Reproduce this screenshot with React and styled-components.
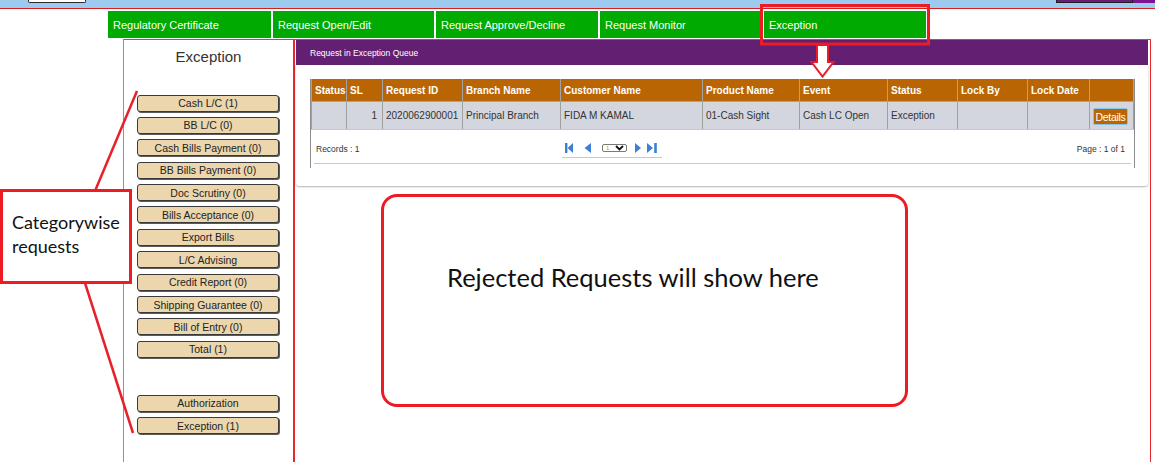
import React from "react";
import styled, { createGlobalStyle } from "styled-components";

const GlobalStyle = createGlobalStyle`
  html, body {
    margin: 0;
    padding: 0;
    background: #fff;
  }
  body {
    font-family: "Liberation Sans", Arial, sans-serif;
  }
`;

const categories = [
  "Cash L/C (1)",
  "BB L/C (0)",
  "Cash Bills Payment (0)",
  "BB Bills Payment (0)",
  "Doc Scrutiny (0)",
  "Bills Acceptance (0)",
  "Export Bills",
  "L/C Advising",
  "Credit Report (0)",
  "Shipping Guarantee (0)",
  "Bill of Entry (0)",
  "Total (1)",
];

const tabs = [
  { label: "Regulatory Certificate", w: 163 },
  { label: "Request Open/Edit", w: 161 },
  { label: "Request Approve/Decline", w: 162 },
  { label: "Request Monitor", w: 162 },
  { label: "Exception", w: 162 },
];

const columns = [
  { title: "Status", w: 35 },
  { title: "SL", w: 36 },
  { title: "Request ID", w: 80 },
  { title: "Branch Name", w: 98 },
  { title: "Customer Name", w: 142 },
  { title: "Product Name", w: 97 },
  { title: "Event", w: 88 },
  { title: "Status", w: 70 },
  { title: "Lock By", w: 70 },
  { title: "Lock Date", w: 62 },
  { title: "", w: 44 },
];

const App = () => {
  return (
    <Page>
      <GlobalStyle />
      <TopStrip>
        <StripButton />
        <StripUser />
        <StripEdge />
      </TopStrip>

      <Nav>
        {tabs.map((t) => (
          <Tab key={t.label} $w={t.w}>{t.label}</Tab>
        ))}
      </Nav>

      <Body>
        <Sidebar>
          <SideTitle>Exception</SideTitle>
          <CatList>
            {categories.map((c) => (
              <CatButton key={c}>{c}</CatButton>
            ))}
          </CatList>
          <CatList $top={37}>
            <CatButton>Authorization</CatButton>
            <CatButton>Exception (1)</CatButton>
          </CatList>
        </Sidebar>

        <Main>
          <PanelHeader>Request in Exception Queue</PanelHeader>
          <PanelBody>
            <GridBox>
              <Grid>
                <colgroup>
                  {columns.map((c, i) => (
                    <col key={i} style={{ width: c.w }} />
                  ))}
                </colgroup>
                <thead>
                  <tr>
                    {columns.map((c, i) => (
                      <Th key={i}>{c.title}</Th>
                    ))}
                  </tr>
                </thead>
                <tbody>
                  <tr>
                    <Td></Td>
                    <Td $right>1</Td>
                    <Td>2020062900001</Td>
                    <Td>Principal Branch</Td>
                    <Td>FIDA M KAMAL</Td>
                    <Td>01-Cash Sight</Td>
                    <Td>Cash LC Open</Td>
                    <Td>Exception</Td>
                    <Td></Td>
                    <Td></Td>
                    <Td>
                      <DetailsButton>Details</DetailsButton>
                    </Td>
                  </tr>
                </tbody>
              </Grid>
              <PagerRow>
                <SmallText>Records : 1</SmallText>
                <Pager>
                  <PagerIcon $ml={3} width="8" height="10" viewBox="0 0 8 10">
                    <rect x="0" y="0" width="2.4" height="10" fill="#3d7fd6" />
                    <polygon points="8,0 8,10 2.6,5" fill="#3d7fd6" />
                  </PagerIcon>
                  <PagerIcon $ml={11} width="7" height="10" viewBox="0 0 7 10">
                    <polygon points="7,0 7,10 0.5,5" fill="#3d7fd6" />
                  </PagerIcon>
                  <PageSelect>
                    <span>1</span>
                    <svg width="9" height="6" viewBox="0 0 9 6">
                      <polyline points="1,1 4.5,4.5 8,1" fill="none" stroke="#111" strokeWidth="1.8" />
                    </svg>
                  </PageSelect>
                  <PagerIcon $ml={8} width="6" height="10" viewBox="0 0 6 10">
                    <polygon points="0,0 0,10 6,5" fill="#3d7fd6" />
                  </PagerIcon>
                  <PagerIcon $ml={6} width="10" height="10" viewBox="0 0 10 10">
                    <polygon points="0,0 0,10 6,5" fill="#3d7fd6" />
                    <rect x="7.2" y="0" width="2.6" height="10" fill="#3d7fd6" />
                  </PagerIcon>
                </Pager>
                <SmallText $right>Page : 1 of 1</SmallText>
              </PagerRow>
              <BlueRule />
            </GridBox>
          </PanelBody>
        </Main>
      </Body>

      {/* annotation layer drawn over the screen */}
      <Marks width="1155" height="462" viewBox="0 0 1155 462">
        <line x1="137" y1="91" x2="95" y2="191" stroke="#e8202a" strokeWidth="2.5" />
        <line x1="85" y1="283" x2="133" y2="433" stroke="#e8202a" strokeWidth="2.5" />
        <rect x="761.5" y="5.5" width="167" height="38.5" fill="none" stroke="#ed1c24" strokeWidth="3" />
        <polygon
          points="817,45 828,45 828,62 833.5,62 822.5,76.5 811.5,62 817,62"
          fill="#fff"
          stroke="#ed1c24"
          strokeWidth="2"
        />
      </Marks>
      <CategoryNote>
        Categorywise
        <br />
        requests
      </CategoryNote>
      <RejectedNote>Rejected Requests will show here</RejectedNote>
    </Page>
  );
};

const Page = styled.div`
  position: relative;
  width: 1155px;
  height: 462px;
  overflow: hidden;
`;

const TopStrip = styled.div`
  height: 8px;
  background: #9ccbef;
  border-bottom: 1px solid #d41f1f;
  display: flex;
  align-items: flex-start;
`;

const StripButton = styled.div`
  margin-left: 28px;
  width: 56px;
  height: 2px;
  background: #fff;
  border: 1.5px solid #2c2c2c;
  border-top: none;
  border-radius: 0 0 2px 2px;
`;

const StripUser = styled.div`
  margin-left: auto;
  width: 75px;
  height: 2px;
  background: #6c1a7c;
  border: 1px solid #1e1e1e;
  border-top: none;
`;

const StripEdge = styled.div`
  width: 22px;
  height: 3px;
  background: #7c1490;
`;

const Nav = styled.nav`
  display: flex;
  gap: 2px;
  height: 27px;
  margin: 2px 0 1px 108px;
`;

const Tab = styled.div`
  box-sizing: border-box;
  width: ${(p) => p.$w}px;
  padding-left: 5px;
  display: flex;
  align-items: center;
  background: #00aa00;
  color: #fff;
  font-size: 11px;
`;

const Body = styled.div`
  display: flex;
  height: 423px;
  margin: 0 5px 0 123px;
`;

const Sidebar = styled.aside`
  box-sizing: border-box;
  width: 172px;
  flex-shrink: 0;
  padding: 8px 13px 0 13px;
  border-top: 1px solid #e23a3a;
  border-left: 1px solid #f26c6c;
  border-right: 2px solid #e8262b;
  display: flex;
  flex-direction: column;
`;

const SideTitle = styled.div`
  height: 18px;
  line-height: 18px;
  margin-bottom: 28.5px;
  text-align: center;
  font-size: 15px;
  color: #333;
`;

const CatList = styled.div`
  display: flex;
  flex-direction: column;
  gap: 5.4px;
  margin-top: ${(p) => p.$top || 0}px;
`;

const CatButton = styled.div`
  box-sizing: border-box;
  width: 142px;
  height: 17px;
  display: flex;
  align-items: center;
  justify-content: center;
  background: #ecd6ad;
  border: 1px solid #3a3a3a;
  border-radius: 3px;
  box-shadow: 1px 1px 0 #5a5a5a;
  font-size: 10.5px;
  color: #222;
`;

const Main = styled.main`
  flex: 1;
  padding: 0 2px 0 1px;
  border-top: 1px solid #e23a3a;
  border-right: 1px solid #e8262b;
`;

const PanelHeader = styled.div`
  height: 25px;
  padding-left: 14px;
  display: flex;
  align-items: center;
  background: #632072;
  color: #fff;
  font-size: 8.5px;
`;

const PanelBody = styled.div`
  padding: 14px 13px 18px 14px;
  background: #fff;
  border-radius: 0 0 3px 3px;
  box-shadow: 0 1px 2px rgba(0, 0, 0, 0.3);
`;

const GridBox = styled.div`
  border-left: 1px solid #8c8c8c;
  border-right: 1px solid #8c8c8c;
  padding-bottom: 4px;
`;

const Grid = styled.table`
  width: 100%;
  table-layout: fixed;
  border-collapse: collapse;
  font-size: 10px;
`;

const Th = styled.th`
  height: 22px;
  padding: 0 3px;
  text-align: left;
  background: #ba6503;
  color: #fff;
  font-weight: bold;
  border: 1px solid #a3a3a3;
  border-top: none;
  white-space: nowrap;
  overflow: hidden;
`;

const Td = styled.td`
  height: 27px;
  padding: 0 ${(p) => (p.$right ? 5 : 3)}px 0 3px;
  text-align: ${(p) => (p.$right ? "right" : "left")};
  background: #d3d6de;
  color: #333;
  border-left: 1px solid #a0a0a0;
  border-right: 1px solid #a0a0a0;
  border-bottom: 1px solid #a9d3ec;
  white-space: nowrap;
  overflow: hidden;
`;

const DetailsButton = styled.span`
  box-sizing: border-box;
  display: inline-flex;
  align-items: center;
  justify-content: center;
  width: 35px;
  height: 17px;
  margin-top: 2px;
  background: #ba6503;
  border: 1px solid #86c5e6;
  border-radius: 2px;
  color: #fff;
  font-size: 10.5px;
  letter-spacing: -0.3px;
`;

const PagerRow = styled.div`
  display: grid;
  grid-template-columns: 251px 100px 1fr;
  align-items: center;
  height: 29px;
  padding-top: 4px;
`;

const SmallText = styled.div`
  padding: 0 ${(p) => (p.$right ? 9 : 0)}px 0 ${(p) => (p.$right ? 0 : 5)}px;
  text-align: ${(p) => (p.$right ? "right" : "left")};
  font-size: 8.5px;
  color: #333;
`;

const Pager = styled.div`
  display: flex;
  align-items: center;
  height: 18px;
  border-bottom: 1px solid #a9d3ec;
`;

const PagerIcon = styled.svg`
  display: block;
  margin-left: ${(p) => p.$ml}px;
`;

const PageSelect = styled.span`
  box-sizing: border-box;
  display: inline-flex;
  align-items: center;
  justify-content: space-between;
  width: 25px;
  height: 8px;
  margin-left: 11px;
  padding: 0 2px 0 3px;
  border: 1px solid #7a7a7a;
  border-radius: 2px;
  font-size: 6px;
  color: #c99a1c;
`;

const BlueRule = styled.div`
  margin: 0 3px;
  border-top: 1px solid #a9d3ec;
`;

const Marks = styled.svg`
  position: absolute;
  left: 0;
  top: 0;
  pointer-events: none;
`;

const CategoryNote = styled.div`
  position: absolute;
  left: 0;
  top: 189px;
  box-sizing: border-box;
  width: 132px;
  height: 95px;
  padding: 18px 0 0 9px;
  background: #fff;
  border: 3px solid #ed1c24;
  font-family: Lato, "Open Sans", sans-serif;
  font-size: 18px;
  line-height: 24px;
  color: #111;
`;

const RejectedNote = styled.div`
  position: absolute;
  left: 381px;
  top: 194px;
  box-sizing: border-box;
  width: 527px;
  height: 213px;
  padding: 65px 0 0 63px;
  background: #fff;
  border: 3px solid #ed1c24;
  border-radius: 16px;
  font-family: Lato, "Open Sans", sans-serif;
  font-size: 25.5px;
  line-height: 30px;
  color: #111;
`;

export default App;
